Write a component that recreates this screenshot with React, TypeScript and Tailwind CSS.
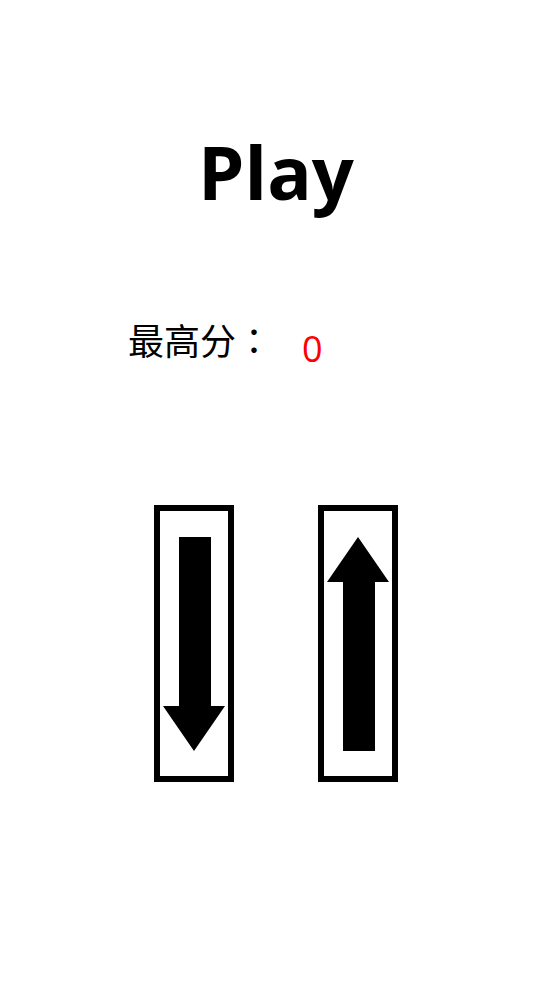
import React from "react";

const latin = { fontFamily: '"Open Sans", "Noto Sans CJK SC", sans-serif' };
const cjk = { fontFamily: '"Noto Sans CJK SC", "Open Sans", sans-serif' };
// TC puts the full-width colon in the middle of its cell
const cjkColon = { fontFamily: '"Noto Sans CJK TC", "Noto Sans CJK SC", sans-serif' };

function ArrowButton({ dir }: { dir: "up" | "down" }) {
  // drawn in the inner box space (68 x 265)
  const points =
    dir === "down"
      ? "19,26 51,26 51,195 65,195 34,240 3,195 19,195"
      : "34,26 65,71 51,71 51,240 19,240 19,71 3,71";
  return (
    <button className="flex h-[277px] w-[80px] border-[6px] border-black bg-white p-0">
      <svg viewBox="0 0 68 265" className="h-full w-full">
        <polygon points={points} fill="#000" />
      </svg>
    </button>
  );
}

export default function App() {
  return (
    <div className="flex min-h-screen w-full flex-col items-center bg-white text-black">
      <h1 className="mt-[135px] text-[74px] font-bold leading-none" style={latin}>
        Play
      </h1>

      <div className="mt-[112px] flex w-full items-baseline pl-[128px]">
        <span className="text-[36px] leading-none" style={cjk}>
          最高分
          <span style={cjkColon}>：</span>
        </span>
        <span
          className="ml-[30px] translate-y-[7px] text-[36px] leading-none text-[#ff0000]"
          style={latin}
        >
          0
        </span>
      </div>

      <div className="mt-[145px] flex gap-[84px]">
        <ArrowButton dir="down" />
        <ArrowButton dir="up" />
      </div>
    </div>
  );
}
